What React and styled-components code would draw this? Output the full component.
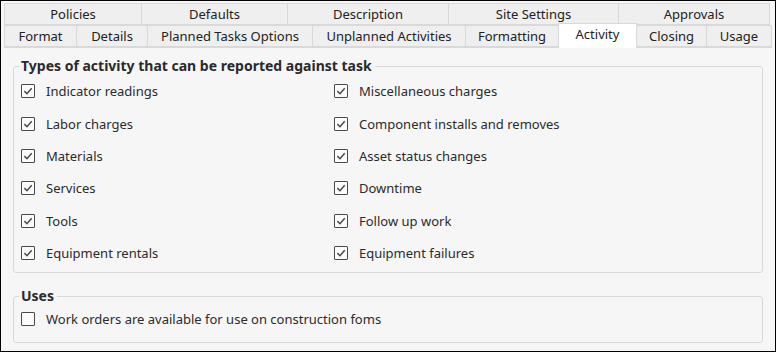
import React from "react";
import styled, { createGlobalStyle } from "styled-components";

const GlobalStyle = createGlobalStyle`
  html, body {
    margin: 0;
    padding: 0;
    background: #ffffff;
  }
  * {
    box-sizing: border-box;
  }
`;

const Window = styled.div`
  width: 776px;
  height: 352px;
  border: 1px solid #000;
  background: #f7f7f7;
  padding: 2px 3px 0 3px;
  display: flex;
  flex-direction: column;
  font-family: "Noto Sans", "DejaVu Sans", sans-serif;
  font-size: 13px;
  color: #1a1a1a;
`;

const TabRow = styled.div`
  display: flex;
  align-items: flex-end;
  height: 22px;
  position: relative;
  z-index: ${(p) => (p.$front ? 2 : 1)};
`;

const Tab = styled.div`
  width: ${(p) => p.$w}px;
  height: ${(p) => (p.$active ? 25 : 22)}px;
  margin-bottom: ${(p) => (p.$active ? -1 : 0)}px;
  display: flex;
  align-items: ${(p) => (p.$active ? "flex-start" : "center")};
  padding-top: ${(p) => (p.$active ? 1 : 0)}px;
  justify-content: center;
  background: ${(p) => (p.$active ? "#ffffff" : "#efefef")};
  border: 1px solid #d9d9d9;
  border-bottom: ${(p) => (p.$active ? "none" : "1px solid #d9d9d9")};
  margin-left: -1px;
  white-space: nowrap;
  color: #222;
  &:first-child {
    margin-left: 0;
  }
`;

const Panel = styled.div`
  flex: 1;
  background: #f6f6f6;
  border-top: 1px solid #d9d9d9;
  padding: 10px 9px 0 9px;
  display: flex;
  flex-direction: column;
  gap: 15px;
`;

const Group = styled.fieldset`
  margin: 0;
  border: 1px solid #d6dade;
  border-radius: 3px;
  padding: ${(p) => p.$pad};
  min-width: 0;
`;

const Legend = styled.legend`
  font-weight: bold;
  font-size: 14px;
  color: #2a2a2a;
  padding: 0 3px 0 2px;
  margin-left: -2px;
  line-height: 16px;
`;

const Grid = styled.div`
  display: grid;
  grid-template-columns: 313px 1fr;
  grid-auto-flow: column;
  grid-template-rows: repeat(6, 32.4px);
`;

const Option = styled.label`
  display: flex;
  align-items: center;
  gap: 11px;
  height: ${(p) => (p.$h ? `${p.$h}px` : "auto")};
  color: #2b2b2b;
  white-space: nowrap;
`;

const Box = styled.span`
  width: 14px;
  height: 14px;
  border: 1.5px solid #4a4a4a;
  border-radius: 1px;
  background: #fbfbfb;
  display: flex;
  align-items: center;
  justify-content: center;
  flex-shrink: 0;
`;

function Check({ checked, label, h }) {
  return (
    <Option $h={h}>
      <Box>
        {checked && (
          <svg width="10" height="10" viewBox="0 0 10 10">
            <path d="M1.4 5.1 L4 7.7 L8.7 2.3" fill="none" stroke="#4a4a4a" strokeWidth="1.5" />
          </svg>
        )}
      </Box>
      {label}
    </Option>
  );
}

const topTabs = [
  ["Policies", 138],
  ["Defaults", 147],
  ["Description", 162],
  ["Site Settings", 171],
  ["Approvals", 152],
];

const bottomTabs = [
  ["Format", 73],
  ["Details", 72],
  ["Planned Tasks Options", 166],
  ["Unplanned Activities", 154],
  ["Formatting", 94],
  ["Activity", 79],
  ["Closing", 71],
  ["Usage", 66],
];

const left = [
  "Indicator readings",
  "Labor charges",
  "Materials",
  "Services",
  "Tools",
  "Equipment rentals",
];

const right = [
  "Miscellaneous charges",
  "Component installs and removes",
  "Asset status changes",
  "Downtime",
  "Follow up work",
  "Equipment failures",
];

export default function App() {
  return (
    <>
      <GlobalStyle />
      <Window>
        <TabRow>
          {topTabs.map(([t, w]) => (
            <Tab key={t} $w={w}>
              {t}
            </Tab>
          ))}
        </TabRow>
        <TabRow $front>
          {bottomTabs.map(([t, w]) => (
            <Tab key={t} $w={w} $active={t === "Activity"}>
              {t}
            </Tab>
          ))}
        </TabRow>
        <Panel>
          <Group $pad="1px 8px 3px 7px">
            <Legend>Types of activity that can be reported against task</Legend>
            <Grid>
              {left.concat(right).map((t) => (
                <Check key={t} checked label={t} />
              ))}
            </Grid>
          </Group>
          <Group $pad="5px 8px 13px 7px">
            <Legend>Uses</Legend>
            <Check h={20} label="Work orders are available for use on construction foms" />
          </Group>
        </Panel>
      </Window>
    </>
  );
}
